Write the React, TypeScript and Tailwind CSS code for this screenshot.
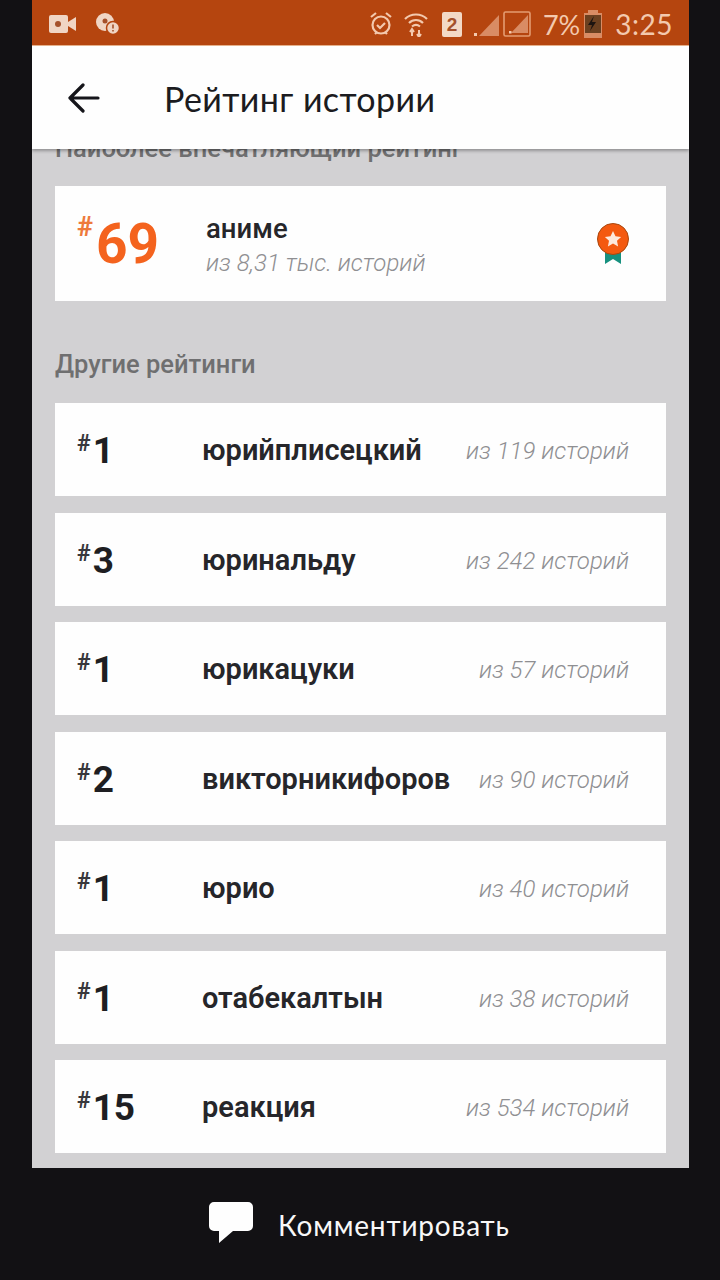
import React from "react";

const rows = [
  { rank: "1", name: "юрийплисецкий", of: "из 119 историй", mb: "mb-[17px]" },
  { rank: "3", name: "юринальду", of: "из 242 историй", mb: "mb-[16px]" },
  { rank: "1", name: "юрикацуки", of: "из 57 историй", mb: "mb-[17px]" },
  { rank: "2", name: "викторникифоров", of: "из 90 историй", mb: "mb-[16px]" },
  { rank: "1", name: "юрио", of: "из 40 историй", mb: "mb-[17px]" },
  { rank: "1", name: "отабекалтын", of: "из 38 историй", mb: "mb-[16px]" },
  { rank: "15", name: "реакция", of: "из 534 историй", mb: "mb-0" },
];

function Row({ rank, name, of, mb }: { rank: string; name: string; of: string; mb: string }) {
  return (
    <div className={`flex h-[93px] items-center bg-[#fefefe] pl-[22px] pr-[37px] pt-[2px] ${mb}`}>
      <div className="flex h-[46px] w-[125px] shrink-0 items-start">
        <span className="mt-[3px] text-[23px] leading-[26px] font-bold text-[#38383c]">#</span>
        <span className="ml-[2px] mt-[2px] text-[37px] leading-[42px] font-bold text-[#1e1e22]">{rank}</span>
      </div>
      <div className="whitespace-nowrap text-[29px] font-semibold text-[#26262a]">{name}</div>
      <div className="ml-auto whitespace-nowrap text-[24px] font-light italic text-[#8f8f92]">{of}</div>
    </div>
  );
}

function StatusBar() {
  const c = "#f3c9ae";
  return (
    <div className="flex h-[46px] shrink-0 items-center border-b border-[#e9b48e] bg-[#b5450f] pl-[17px] pr-[16px] pt-[3px]">
      <svg width="28" height="20" viewBox="0 0 28 20" fill="none">
        <rect x="0" y="1" width="19" height="18" rx="2" fill="#f0d5c4" />
        <circle cx="9" cy="10" r="3" fill="#a5502a" />
        <path d="M19 8l8-5v14l-8-5z" fill="#f0d5c4" />
      </svg>
      <svg className="ml-[18px]" width="26" height="24" viewBox="0 0 26 24" fill="none">
        <circle cx="10" cy="10" r="9" fill="#f0d5c4" />
        <circle cx="10" cy="9" r="2.5" fill="#a5502a" />
        <circle cx="18" cy="16" r="6.5" fill="#f0d5c4" stroke="#b5450f" strokeWidth="1.5" />
        <path d="M18 12.5v4M18 18v1.5" stroke="#a5502a" strokeWidth="1.6" />
      </svg>
      <div className="flex-1" />
      <svg width="24" height="26" viewBox="0 0 24 26" fill="none" stroke={c} strokeWidth="2.2">
        <circle cx="12" cy="14" r="8.5" />
        <path d="M8 14l3 3 5-5M2 6l5-4M22 6l-5-4M6 23l2-2M18 23l-2-2" />
      </svg>
      <svg className="ml-[10px]" width="26" height="26" viewBox="0 0 26 26" fill="none" stroke={c} strokeWidth="2.2">
        <path d="M2 8c6-6 16-6 22 0M6 12c4-4 10-4 14 0M9 15.500c2.500-2 5.500-2 8 0" />
        <path d="M9 25v-6M7 21l2-3 2 3M16 19v6M14 23l2 3 2-3" strokeWidth="2" />
      </svg>
      <div className="ml-[13px] flex h-[25px] w-[20px] items-center justify-center rounded-[2px] bg-[#f3d9c6] text-[19px] leading-none font-bold text-[#a5502a] [font-family:'Liberation_Sans',sans-serif]">2</div>
      <svg className="ml-[11px]" width="26" height="26" viewBox="0 0 26 26">
        <path d="M6 25L26 4v21z" fill="#d98c64" />
        <rect x="1" y="22" width="3" height="3" fill={c} />
      </svg>
      <svg className="ml-[4px]" width="28" height="26" viewBox="0 0 28 26" fill="none">
        <rect x="1" y="1" width="26" height="24" rx="1.5" stroke="#e49c72" strokeWidth="1.6" />
        <path d="M8 22L25 4v18z" fill="#d98c64" />
        <rect x="6" y="20" width="2.500" height="2.500" fill={c} />
      </svg>
      <div className="ml-[12px] text-[27px] leading-none text-[#f3c9ae] [font-family:'Lato',sans-serif]">7%</div>
      <svg className="ml-[3px]" width="20" height="28" viewBox="0 0 20 28">
        <rect x="5" y="0" width="10" height="3" fill="#d98c64" />
        <rect x="1" y="3" width="18" height="25" fill="#d98c64" />
        <rect x="2" y="5" width="16" height="18" fill="#6b4020" />
        <path d="M11 6l-6 9h4l-2 6 6-9h-4z" fill="#1d1410" />
      </svg>
      <div className="ml-[12px] text-[28px] leading-none tracking-[0.5px] text-[#f3c9ae] [font-family:'Lato',sans-serif]">3:25</div>
    </div>
  );
}

export default function App() {
  return (
    <div className="h-[1280px] w-[720px] overflow-hidden bg-[#121114] pl-[32px] pr-[31px] [font-family:'Roboto',sans-serif]">
      <div className="flex h-[1168px] flex-col overflow-hidden bg-[#d2d1d3]">
        <StatusBar />
        <div className="relative z-10 flex h-[103px] shrink-0 items-center bg-[#fefefe] pl-[36px] pt-[3px] shadow-[0_2px_3px_rgba(0,0,0,0.3)]">
          <svg className="mt-[-3px]" width="32" height="30" viewBox="0 0 32 30" fill="none" stroke="#15151a" strokeWidth="3.200" strokeLinecap="round" strokeLinejoin="round">
            <path d="M15 2L2 15l13 13M2 15h28" />
          </svg>
          <div className="ml-[64px] text-[34px] leading-none text-[#1b1b20] [font-family:'Lato',sans-serif] tracking-[0.4px]">Рейтинг истории</div>
        </div>
        <div className="flex-1 overflow-hidden px-[23px]">
          <div className="mt-[-16px] h-[30px] text-[25.5px] leading-[30px] font-medium whitespace-nowrap text-[#6f6f70]">Наиболее впечатляющий рейтинг</div>
          <div className="mt-[23px] flex h-[115px] items-center bg-[#fefefe] pl-[22px] pr-[36px]">
            <div className="flex h-[64px] w-[129px] shrink-0 items-start">
              <span className="text-[27px] leading-[30px] font-bold text-[#ee7a3c]">#</span>
              <span className="ml-[3px] mt-[2px] text-[55px] leading-[60px] font-bold text-[#f4631e]">69</span>
            </div>
            <div className="flex flex-col pt-[3px]">
              <div className="text-[27.5px] leading-[36px] font-medium text-[#26262a]">аниме</div>
              <div className="text-[24px] leading-[33px] font-light italic text-[#8f8f92]">из 8,31 тыс. историй</div>
            </div>
            <svg className="ml-auto mr-[1px]" width="32" height="42" viewBox="0 0 32 42">
              <path d="M8 26v15l8-5 8 5V26z" fill="#17917f" />
              <circle cx="16" cy="16" r="15.500" fill="#f4590f" stroke="#a8480f" strokeWidth="1" />
              <path d="M16 8l2.500 5.200 5.600.7-4.100 3.900 1.100 5.600-5.100-2.800-5.100 2.800 1.100-5.600-4.100-3.900 5.600-.7z" fill="#fde9dc" />
            </svg>
          </div>
          <div className="mt-[46px] mb-[21px] h-[35px] text-[25.5px] leading-[35px] font-medium text-[#6f6f70]">Другие рейтинги</div>
          {rows.map((r) => (
            <Row key={r.name} {...r} />
          ))}
        </div>
      </div>
      <div className="flex h-[112px] items-start">
        <div className="ml-[176px] mt-[34px] flex items-center">
          <svg width="46" height="42" viewBox="0 0 46 42">
            <path d="M6 0h34a5 5 0 015 5v19a5 5 0 01-5 5H25L11 41V29H6a5 5 0 01-5-5V5a5 5 0 015-5z" fill="#fefefe" />
          </svg>
          <div className="ml-[24px] mt-[4px] text-[28px] leading-none tracking-[0.8px] text-[#f8f8f8] [font-family:'Lato',sans-serif]">Комментировать</div>
        </div>
      </div>
    </div>
  );
}
